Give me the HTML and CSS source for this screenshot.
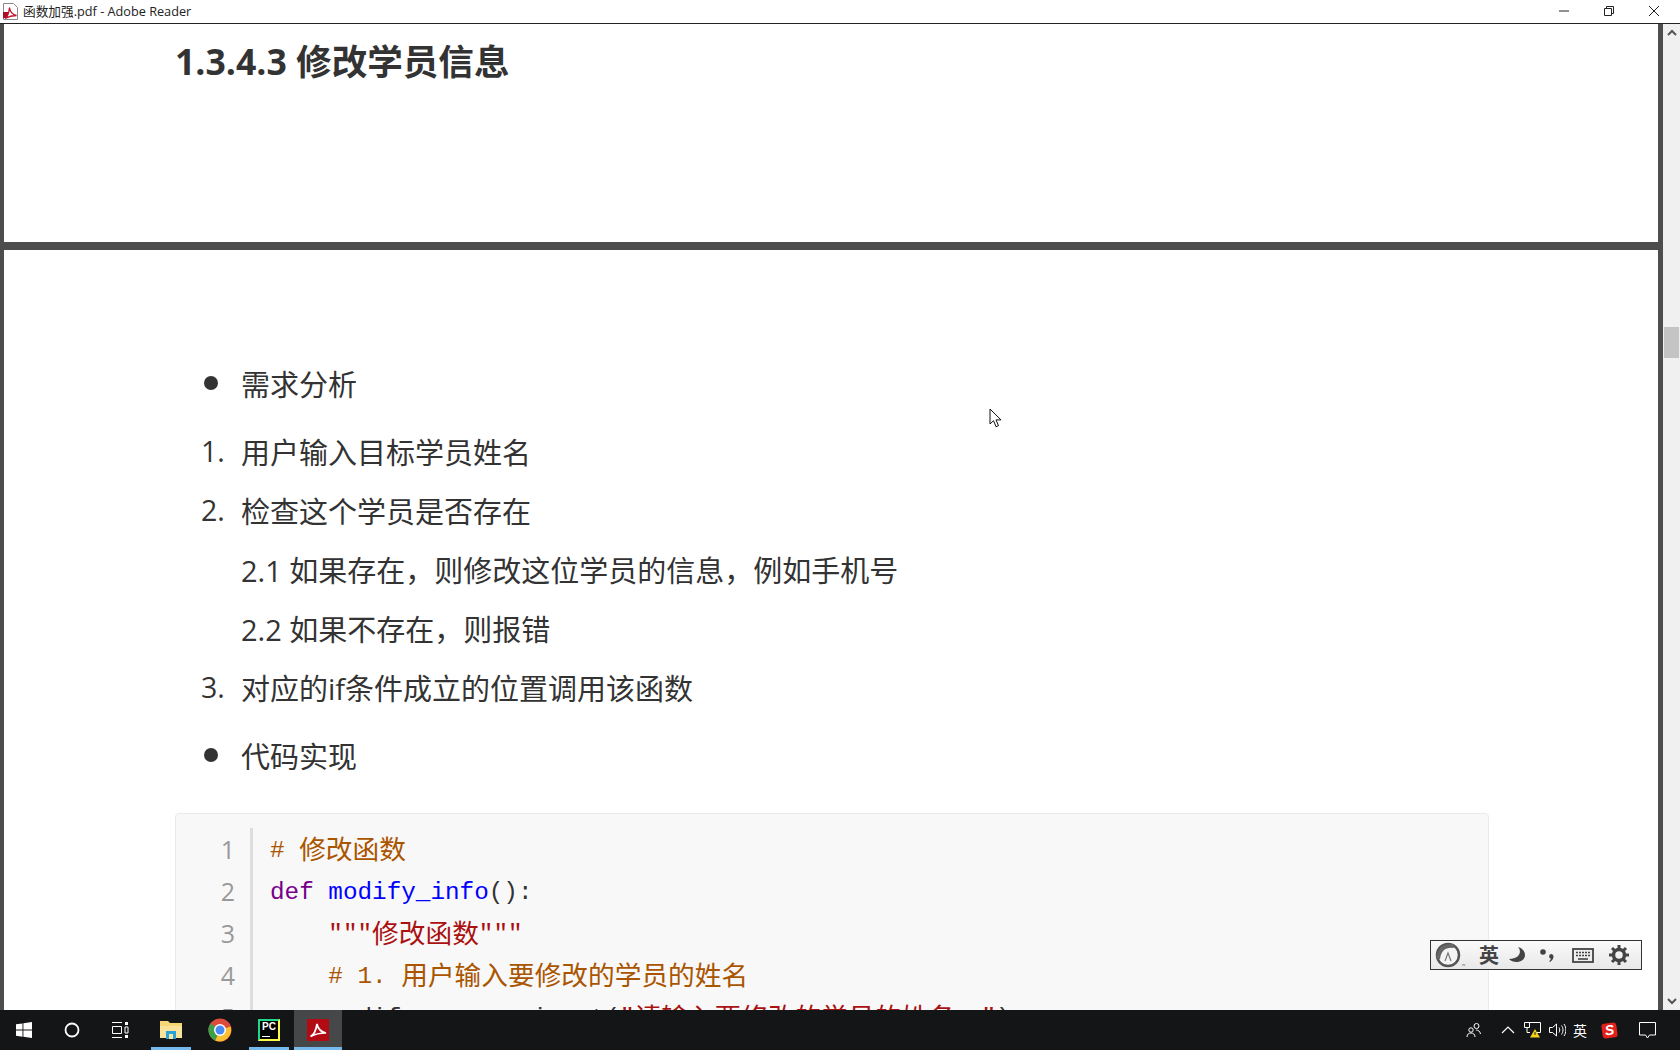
FILE: index.html
```html
<!DOCTYPE html>
<html lang="zh-CN">
<head>
<meta charset="utf-8">
<title>函数加强.pdf - Adobe Reader</title>
<link rel="stylesheet" href="styles.css">
</head>
<body>
<div class="window">
  <header class="titlebar">
    <svg class="app-icon" viewBox="0 0 16 17" width="16" height="17"><path d="M1.500 .5h10l4 4v12h-14z" fill="#fff" stroke="#8a8a8a"/><path d="M1 9h5v6H1z" fill="#a80f26"/><path d="M3 15.500c2.500-1.500 4-6 4.500-11 .5 4 2.500 7 7 8-4 0-8 1-11.500 3z" fill="none" stroke="#c41230" stroke-width="1.300"/></svg>
    <span class="title-text">函数加强.pdf - Adobe Reader</span>
    <div class="win-controls">
      <svg class="win-btn" viewBox="0 0 12 12" width="12" height="12"><path d="M1 6h10" stroke="#222" stroke-width="1"/></svg>
      <svg class="win-btn" viewBox="0 0 12 12" width="12" height="12"><path d="M1.500 3.500h7v7h-7zM3.500 3.500v-2h7v7h-2" fill="none" stroke="#222"/></svg>
      <svg class="win-btn" viewBox="0 0 12 12" width="12" height="12"><path d="M1 1l10 10M11 1L1 11" stroke="#222" stroke-width="1"/></svg>
    </div>
  </header>

  <main class="viewer">
    <div class="strip"></div>
    <div class="pages">
      <section class="page page-top">
        <h1 class="heading">1.3.4.3 修改学员信息</h1>
      </section>
      <section class="page page-main">
        <div class="list">
          <div class="item bullet-item"><span class="marker"><i class="dot"></i></span>需求分析</div>
          <div class="item first-num"><span class="marker">1.</span>用户输入目标学员姓名</div>
          <div class="item"><span class="marker">2.</span>检查这个学员是否存在</div>
          <div class="item"><span class="marker"></span>2.1 如果存在，则修改这位学员的信息，例如手机号</div>
          <div class="item"><span class="marker"></span>2.2 如果不存在，则报错</div>
          <div class="item"><span class="marker">3.</span>对应的if条件成立的位置调用该函数</div>
          <div class="item bullet-item last-bullet"><span class="marker"><i class="dot"></i></span>代码实现</div>
        </div>
        <div class="code">
          <div class="gutter">
            <div class="ln">1</div><div class="ln">2</div><div class="ln">3</div><div class="ln">4</div><div class="ln">5</div>
          </div>
          <div class="lines">
            <div class="cl cm"># <span class="cjk">修改函数</span></div>
            <div class="cl"><span class="kw">def</span> <span class="fn">modify_info</span>():</div>
            <div class="cl st">    """<span class="cjk">修改函数</span>"""</div>
            <div class="cl cm">    # 1. <span class="cjk">用户输入要修改的学员的姓名</span></div>
            <div class="cl">    modify_name = input(<span class="st">"<span class="cjk">请输入要修改的学员的姓名：</span>"</span>)</div>
          </div>
        </div>
      </section>
    </div>
    <div class="strip strip-right"></div>
    <div class="scrollbar">
      <svg class="sb-arrow" viewBox="0 0 12 8" width="12" height="8"><path d="M2 6l4-4 4 4" fill="none" stroke="#555" stroke-width="2"/></svg>
      <div class="sb-thumb"></div>
      <svg class="sb-arrow sb-down" viewBox="0 0 12 8" width="12" height="8"><path d="M2 2l4 4 4-4" fill="none" stroke="#555" stroke-width="2"/></svg>
    </div>
  </main>

  <footer class="taskbar">
    <div class="tb-left">
      <div class="tb-btn"><svg viewBox="0 0 16 16" width="16" height="16"><path d="M0 2.300l6.500-.9v6.200H0zM7.400 1.300L16 0v7.600H7.400zM0 8.500h6.500v6.200L0 13.700zM7.400 8.500H16V16l-8.600-1.300z" fill="#fff"/></svg></div>
      <div class="tb-btn"><svg viewBox="0 0 16 16" width="16" height="16"><circle cx="8" cy="8" r="6.500" fill="none" stroke="#fff" stroke-width="1.800"/></svg></div>
      <div class="tb-btn"><svg viewBox="0 0 18 16" width="18" height="16"><path d="M1 .5h10M1 15.500h10M1.500 4.500h9v7h-9z" fill="none" stroke="#fff"/><path d="M14 0h3v3h-3z" fill="#fff"/><path d="M14 5h3v6h-3z" fill="none" stroke="#fff"/><path d="M14 13h3v3h-3z" fill="#fff"/></svg></div>
      <div class="tb-btn tb-app running"><svg viewBox="0 0 22 20" width="22" height="20"><path d="M0 1h8l2 2h12v15H0z" fill="#f6d776"/><path d="M0 6h22v12H0z" fill="#fbe29a"/><path d="M6 11h10v8H6z" fill="#27a3d9"/><path d="M9 14h4v5H9z" fill="#fbe29a"/></svg></div>
      <div class="tb-btn tb-app"><svg viewBox="0 0 24 24" width="24" height="24"><circle cx="12" cy="12" r="11.500" fill="#dd4b3e"/><path d="M12 12L22.500 8.500A11.500 11.500 0 0 1 7 22.500z" fill="#fbc02d"/><path d="M12 12l-5 10.500A11.500 11.500 0 0 1 2.500 5.500z" fill="#3f9e48"/><circle cx="12" cy="12" r="6" fill="#fff"/><circle cx="12" cy="12" r="4.500" fill="#4a8af4"/></svg></div>
      <div class="tb-btn tb-app running"><div class="pc-logo"><span class="pc-text">PC</span><i class="pc-bar"></i></div></div>
      <div class="tb-btn tb-app running active"><svg viewBox="0 0 22 22" width="22" height="22"><rect width="22" height="22" fill="#b30b14"/><path d="M3.500 17.500c3-1.500 5.500-6 6.500-12.500 1 5 4 8 9 9-5 0-11 1-15.500 3.500z" fill="none" stroke="#fff" stroke-width="1.700"/></svg></div>
    </div>
    <div class="tray">
      <svg class="tray-people" viewBox="0 0 16 16" width="16" height="16"><circle cx="10.500" cy="4" r="2.500" fill="none" stroke="#fff"/><circle cx="5" cy="8" r="2.200" fill="none" stroke="#fff"/><path d="M1 15c0-3 2-4 4-4s4 1 4 4M10 8c2 0 4 1 4.500 4" fill="none" stroke="#fff"/></svg>
      <svg class="tray-caret" viewBox="0 0 14 8" width="14" height="8"><path d="M1 7l6-6 6 6" fill="none" stroke="#fff" stroke-width="1.200"/></svg>
      <svg class="tray-net" viewBox="0 0 17 16" width="17" height="16"><path d="M.5 .5h16v10h-7M.5 .5v5h5v-5M3 5.500v5h3" fill="none" stroke="#fff"/><path d="M11 7l5 8.500H6z" fill="#f2d21b"/><path d="M11 10v3" stroke="#222"/></svg>
      <svg class="tray-sound" viewBox="0 0 17 14" width="17" height="14"><path d="M.5 4.500h3l4-3.500v12l-4-3.500h-3z" fill="none" stroke="#fff"/><path d="M10 4.500c1 1.500 1 3.500 0 5M12.500 2.500c2 2.500 2 6.500 0 9M15 1c2.500 3.500 2.500 8.500 0 12" fill="none" stroke="#fff"/></svg>
      <span class="tray-ime">英</span>
      <span class="tray-sogou">S</span>
      <svg class="tray-note" viewBox="0 0 17 17" width="17" height="17"><path d="M.5 .5h16v12.500h-6l-2 3-2-3h-6z" fill="none" stroke="#fff"/></svg>
    </div>
  </footer>

  <div class="ime">
    <svg class="ime-logo" viewBox="0 0 26 26" width="26" height="26"><circle cx="13" cy="13" r="11" fill="#f4f4f4" stroke="#555" stroke-width="2.500"/><path d="M3 17C4 8 10 3 19 4" fill="none" stroke="#666" stroke-width="4"/><path d="M10 19l3-8 3 8" fill="none" stroke="#777" stroke-width="1.200"/></svg>
    <span class="ime-tm">˷</span>
    <span class="ime-han">英</span>
    <svg class="ime-moon" viewBox="0 0 16 16" width="16" height="16"><path d="M9 0c4 4 2 12-9 12 4 5 16 4 16-4 0-4-3-7-7-8z" fill="#444"/></svg>
    <svg class="ime-punct" viewBox="0 0 16 16" width="16" height="16"><circle cx="4" cy="5" r="2.800" fill="#444"/><path d="M12 7a2.500 2.500 0 0 1 2.500 3c-.3 2-1.800 4-3.500 5l-.8-.7c1-1 1.500-1.800 1.600-2.500a2.500 2.500 0 0 1 .2-4.800z" fill="#444"/></svg>
    <svg class="ime-kbd" viewBox="0 0 22 15" width="22" height="15"><rect x="1" y="1" width="20" height="13" fill="#eee" stroke="#444" stroke-width="1.800"/><path d="M4 4.500h14M4 7.500h14" stroke="#444" stroke-width="1.600" stroke-dasharray="2 1"/><path d="M6 11h10" stroke="#444" stroke-width="1.600"/></svg>
    <svg class="ime-gear" viewBox="0 0 20 20" width="20" height="20"><circle cx="10" cy="10" r="5.500" fill="none" stroke="#444" stroke-width="3.500"/><path d="M10 0v4M10 16v4M0 10h4M16 10h4M3 3l2.800 2.800M14.200 14.200L17 17M17 3l-2.800 2.800M5.800 14.200L3 17" stroke="#444" stroke-width="3"/></svg>
  </div>

  <svg class="cursor" viewBox="0 0 13 20" width="13" height="20"><path d="M1 1v15l3.500-3.300 2.500 6 2.500-1-2.500-5.800h5z" fill="#fff" stroke="#111"/></svg>
</div>
</body>
</html>
```

FILE: styles.css
```css
* { box-sizing: border-box; }
html, body { margin: 0; height: 100%; overflow: hidden; }
body { background: #fff; }

.window {
  position: relative;
  width: 1680px;
  height: 1050px;
  display: flex;
  flex-direction: column;
  overflow: hidden;
  font-family: "Open Sans", "Noto Sans CJK SC", sans-serif;
  color: #333;
}

.titlebar {
  flex: 0 0 24px;
  height: 24px;
  display: flex;
  align-items: center;
  background: #fff;
  border-bottom: 1px solid #222;
  padding-left: 2px;
}
.app-icon { margin-right: 5px; flex: none; }
.title-text { font: 12.700px/20px "Open Sans", "Noto Sans CJK SC", sans-serif; color: #222; margin-top: -2px; }
.win-controls { margin-left: auto; display: flex; align-items: center; gap: 33px; padding-right: 20px; margin-top: -2px; }
.win-btn { display: block; flex: none; }

.viewer { flex: 1; min-height: 0; display: flex; overflow: hidden; }
.strip { flex: 0 0 4px; background: #4d4d4d; }
.strip-right { flex-basis: 5px; }
.pages { flex: 1; min-width: 0; background: #4d4d4d; display: flex; flex-direction: column; gap: 8px; overflow: hidden; }
.page { background: #fff; flex: none; }
.page-top { height: 218px; padding: 15px 0 0 171px; }
.heading { margin: 0; font-size: 35.600px; line-height: 44px; font-weight: 700; color: #333; white-space: nowrap; }
.page-main { height: 900px; padding: 103px 171px 0 171px; }

.list { display: flex; flex-direction: column; }
.item { display: flex; align-items: center; height: 59px; font-size: 29px; white-space: nowrap; color: #333; }
.marker { flex: 0 0 66px; padding-left: 26px; font-size: 28.500px; }
.dot { display: block; width: 14px; height: 14px; margin-left: 3px; border-radius: 50%; background: #333; }
.first-num { margin-top: 9px; }
.last-bullet { margin-top: 9px; }

.code {
  width: 1314px;
  height: 400px;
  margin-top: 29px;
  padding-top: 14px;
  display: flex;
  background: #f8f8f8;
  border: 1px solid #e8eaec;
  border-radius: 4px;
  font-family: "Liberation Mono", monospace;
  font-size: 24.300px;
}
.gutter { flex: 0 0 77px; height: 400px; border-right: 3px solid #ddd; padding-right: 15px; color: #999; text-align: right; font-family: "Open Sans", sans-serif; font-size: 25px; }
.ln { height: 42px; line-height: 42px; }
.lines { padding: 2px 0 0 17px; color: #333; }
.cl { height: 42px; line-height: 42px; white-space: pre; }
.cjk { font-family: "Noto Sans CJK SC", sans-serif; font-size: 26.700px; line-height: 0; vertical-align: -1.500px; }
.cm { color: #a50; }
.kw { color: #708; }
.fn { color: #00f; }
.st { color: #a11; }

.scrollbar { flex: 0 0 17px; position: relative; background: #f0f0f0; display: flex; flex-direction: column; align-items: center; }
.sb-arrow { margin-top: 5px; flex: none; }
.sb-thumb { position: absolute; top: 303px; left: 1px; width: 15px; height: 31px; background: #c4c4c4; }
.sb-down { margin-top: auto; margin-bottom: 5px; }

.taskbar { flex: 0 0 40px; height: 40px; display: flex; align-items: stretch; justify-content: space-between; background: #131517; position: relative; z-index: 1; }
.tb-left { display: flex; }
.tb-btn { width: 48px; display: flex; align-items: center; justify-content: center; border-bottom: 3px solid transparent; padding-top: 3px; }
.tb-left .tb-btn:nth-child(3) { margin-right: 3px; }
.tb-left .tb-btn.tb-app { width: 40px; margin: 0 4px 0 5px; }
.tb-left .tb-btn.tb-app:nth-child(4) { margin-left: 4px; }
.tb-left .tb-btn.active { width: 48px; margin: 0 0 0 1px; }
.running { border-bottom-color: #76b9ed; }
.active { background: #464749; }
.pc-logo { width: 22px; height: 22px; background: #000; border: 2px solid; border-color: #21d789 #fcf84a #fcf84a #21d789; padding: 1px 0 0 2px; position: relative; }
.pc-text { display: block; font: 700 10px/10px "Liberation Sans", sans-serif; color: #fff; }
.pc-bar { position: absolute; left: 2px; bottom: 2px; width: 8px; height: 1px; background: #fff; }

.tray { display: flex; align-items: center; padding-right: 24px; color: #fff; }
.tray svg { display: block; flex: none; }
.tray-caret { margin-left: 19px; }
.tray-net { margin-left: 9px; }
.tray-sound { margin-left: 8px; }
.tray-ime { margin-left: 7px; font: 14px "Noto Sans CJK SC", sans-serif; }
.tray-sogou { margin-left: 15px; width: 15px; height: 15px; background: #e3201b; border-radius: 3px; transform: rotate(-8deg); font: italic 700 14px/15px "Liberation Sans", sans-serif; text-align: center; color: #fff; }
.tray-note { margin-left: 22px; }

.ime {
  position: absolute;
  left: 1430px;
  top: 940px;
  width: 212px;
  height: 30px;
  display: flex;
  align-items: center;
  padding-left: 4px;
  background: linear-gradient(#fafafa, #e8e8e8);
  border: 1px solid #333;
}
.ime svg { display: block; flex: none; }
.ime-tm { font-size: 9px; color: #777; margin: 10px 0 0 1px; width: 8px; }
.ime-han { margin-left: 9px; font: 700 20px/28px "Noto Sans CJK SC", sans-serif; color: #444; }
.ime-moon { margin-left: 10px; }
.ime-punct { margin-left: 14px; }
.ime-kbd { margin-left: 17px; }
.ime-gear { margin-left: 15px; }

.cursor { position: absolute; left: 989px; top: 408px; }
```
